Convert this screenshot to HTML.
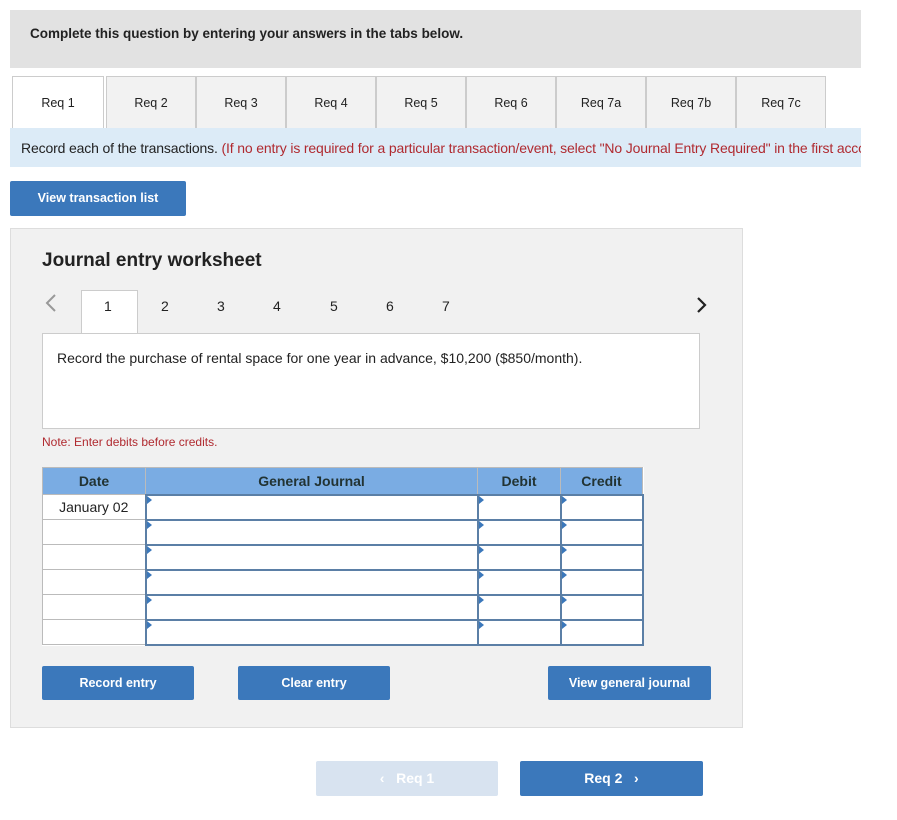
<!DOCTYPE html><html><head><style>
body{margin:0;width:897px;height:820px;background:#fff;font-family:"Liberation Sans",Arial,sans-serif;position:relative;overflow:hidden;color:#222}
.a{position:absolute}
.tab{position:absolute;top:76px;height:51px;width:88px;background:#f2f2f2;border:1px solid #ccc;border-bottom:none;font-size:12.5px;text-align:center;line-height:52px}
.btn{position:absolute;background:#3b78bb;color:#fff;font-weight:bold;font-size:12.5px;text-align:center;border-radius:2px}
.pg{position:absolute;top:298px;font-size:14px}
td{border:1px solid #bbb;padding:0;height:23px}
td.j{border:2px solid #5b7fa6;position:relative}
td.j:before{content:"";position:absolute;left:0;top:0;border-left:5px solid #3b78bb;border-top:4px solid transparent;border-bottom:4px solid transparent}
</style></head><body>
<div class="a" style="left:10px;top:10px;width:851px;height:58px;background:#e2e2e2"></div>
<div class="a" style="left:30px;top:26px;font-size:13.5px;font-weight:bold">Complete this question by entering your answers in the tabs below.</div>
<div class="tab" style="left:12px;background:#fff;width:90px">Req 1</div>
<div class="tab" style="left:106px">Req 2</div>
<div class="tab" style="left:196px">Req 3</div>
<div class="tab" style="left:286px">Req 4</div>
<div class="tab" style="left:376px">Req 5</div>
<div class="tab" style="left:466px">Req 6</div>
<div class="tab" style="left:556px">Req 7a</div>
<div class="tab" style="left:646px">Req 7b</div>
<div class="tab" style="left:736px">Req 7c</div>
<div class="a" style="left:10px;top:128px;width:851px;height:39px;background:#dcebf7"></div>
<div class="a" style="left:21px;top:140px;width:840px;font-size:14px;white-space:nowrap;overflow:hidden;letter-spacing:-0.15px">Record each of the transactions. <span style="color:#b02a30">(If no entry is required for a particular transaction/event, select "No Journal Entry Required" in the first account field.)</span></div>
<div class="btn" style="left:10px;top:181px;width:176px;height:35px;line-height:35px">View transaction list</div>
<div class="a" style="left:10px;top:228px;width:731px;height:498px;background:#f1f1f1;border:1px solid #ddd"></div>
<div class="a" style="left:42px;top:250px;font-size:19px;font-weight:bold">Journal entry worksheet</div>
<svg class="a" style="left:44px;top:293px" width="14" height="20"><path d="M11 2 L3 10 L11 18" stroke="#999" stroke-width="2" fill="none"/></svg>
<div class="a" style="left:81px;top:290px;width:55px;height:44px;background:#fff;border:1px solid #ccc;border-bottom:none"></div>
<div class="pg" style="left:104px">1</div><div class="pg" style="left:161px">2</div><div class="pg" style="left:217px">3</div><div class="pg" style="left:273px">4</div><div class="pg" style="left:330px">5</div><div class="pg" style="left:386px">6</div><div class="pg" style="left:442px">7</div>
<svg class="a" style="left:696px;top:296px" width="12" height="18"><path d="M2 2 L9 9 L2 16" stroke="#222" stroke-width="2.2" fill="none"/></svg>
<div class="a" style="left:42px;top:333px;width:656px;height:94px;background:#fff;border:1px solid #ccc"></div>
<div class="a" style="left:57px;top:350px;font-size:14px">Record the purchase of rental space for one year in advance, $10,200 ($850/month).</div>
<div class="a" style="left:42px;top:435px;font-size:12px;color:#b02a30">Note: Enter debits before credits.</div>
<table class="a" style="left:42px;top:467px;border-collapse:collapse;font-size:14px;background:#fff">
<tr style="background:#7aace3;font-weight:bold;color:#233"><td style="width:102px;height:26px;text-align:center">Date</td><td style="width:331px;text-align:center">General Journal</td><td style="width:82px;text-align:center">Debit</td><td style="width:81px;text-align:center">Credit</td></tr>
<tr><td style="text-align:center">January 02</td><td class="j"></td><td class="j"></td><td class="j"></td></tr>
<tr><td></td><td class="j"></td><td class="j"></td><td class="j"></td></tr>
<tr><td></td><td class="j"></td><td class="j"></td><td class="j"></td></tr>
<tr><td></td><td class="j"></td><td class="j"></td><td class="j"></td></tr>
<tr><td></td><td class="j"></td><td class="j"></td><td class="j"></td></tr>
<tr><td></td><td class="j"></td><td class="j"></td><td class="j"></td></tr>
</table>
<div class="btn" style="left:42px;top:666px;width:152px;height:34px;line-height:34px">Record entry</div>
<div class="btn" style="left:238px;top:666px;width:152px;height:34px;line-height:34px">Clear entry</div>
<div class="btn" style="left:548px;top:666px;width:163px;height:34px;line-height:34px">View general journal</div>
<div class="btn" style="left:316px;top:761px;width:182px;height:35px;line-height:35px;background:#d8e3f0;font-size:14px">&lsaquo;&nbsp;&nbsp; Req 1</div>
<div class="btn" style="left:520px;top:761px;width:183px;height:35px;line-height:35px;font-size:14px">Req 2 &nbsp;&nbsp;&rsaquo;</div>
</body></html>
